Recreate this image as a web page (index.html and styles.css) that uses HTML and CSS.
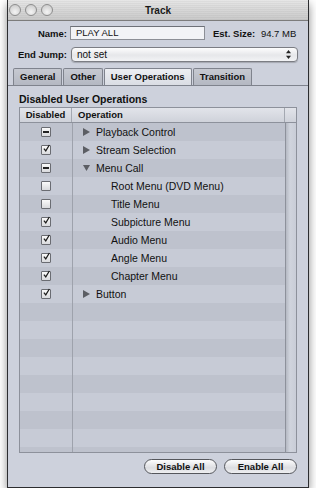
FILE: index.html
```
<!DOCTYPE html>
<html lang="en">
<head>
<meta charset="UTF-8">
<title>Track</title>
<link rel="stylesheet" href="styles.css">
</head>
<body>
<div class="window">
  <div class="titlebar">
    <div class="lights"><span></span><span></span><span></span></div>
    <div class="title">Track</div>
  </div>

  <div class="form-row name-row">
    <label class="label">Name:</label>
    <div class="field">PLAY ALL</div>
    <div class="est"><b>Est. Size:</b> 94.7 MB</div>
  </div>
  <div class="form-row jump-row">
    <label class="label">End Jump:</label>
    <div class="popup">
      <span>not set</span>
      <svg class="arrows" width="5" height="9" viewBox="0 0 5 9"><polygon points="2.5,0 5,3.3 0,3.3" fill="#222"/><polygon points="0,5.7 5,5.7 2.5,9" fill="#222"/></svg>
    </div>
  </div>

  <div class="tabs">
    <div class="tab">General</div>
    <div class="tab">Other</div>
    <div class="tab active">User Operations</div>
    <div class="tab">Transition</div>
  </div>

  <div class="panel">
    <h2 class="heading">Disabled User Operations</h2>
    <div class="table">
      <div class="thead">
        <div class="th th-dis">Disabled</div>
        <div class="th th-op">Operation</div>
        <div class="th"></div>
      </div>
      <div class="tbody">
        <div class="rows">
          <div class="row"><span class="box mixed"><i></i></span><span class="op"><svg class="tri" width="7" height="8" viewBox="0 0 7 8"><polygon points="0,0 7,4 0,8" fill="#5c5e64"/></svg>Playback Control</span></div>
          <div class="row"><span class="box"><svg width="11" height="11" viewBox="0 0 11 11"><path d="M2.3 5.6 L4.6 8.4 L9 1.2" fill="none" stroke="#1c1c1c" stroke-width="1.5"/></svg></span><span class="op"><svg class="tri" width="7" height="8" viewBox="0 0 7 8"><polygon points="0,0 7,4 0,8" fill="#5c5e64"/></svg>Stream Selection</span></div>
          <div class="row"><span class="box mixed"><i></i></span><span class="op"><svg class="tri" width="7" height="8" viewBox="0 0 8 8"><polygon points="0,0.5 8,0.5 4,7.5" fill="#5c5e64"/></svg>Menu Call</span></div>
          <div class="row"><span class="box"></span><span class="op child">Root Menu (DVD Menu)</span></div>
          <div class="row"><span class="box"></span><span class="op child">Title Menu</span></div>
          <div class="row"><span class="box"><svg width="11" height="11" viewBox="0 0 11 11"><path d="M2.3 5.6 L4.6 8.4 L9 1.2" fill="none" stroke="#1c1c1c" stroke-width="1.5"/></svg></span><span class="op child">Subpicture Menu</span></div>
          <div class="row"><span class="box"><svg width="11" height="11" viewBox="0 0 11 11"><path d="M2.3 5.6 L4.6 8.4 L9 1.2" fill="none" stroke="#1c1c1c" stroke-width="1.5"/></svg></span><span class="op child">Audio Menu</span></div>
          <div class="row"><span class="box"><svg width="11" height="11" viewBox="0 0 11 11"><path d="M2.3 5.6 L4.6 8.4 L9 1.2" fill="none" stroke="#1c1c1c" stroke-width="1.5"/></svg></span><span class="op child">Angle Menu</span></div>
          <div class="row"><span class="box"><svg width="11" height="11" viewBox="0 0 11 11"><path d="M2.3 5.6 L4.6 8.4 L9 1.2" fill="none" stroke="#1c1c1c" stroke-width="1.5"/></svg></span><span class="op child">Chapter Menu</span></div>
          <div class="row"><span class="box"><svg width="11" height="11" viewBox="0 0 11 11"><path d="M2.3 5.6 L4.6 8.4 L9 1.2" fill="none" stroke="#1c1c1c" stroke-width="1.5"/></svg></span><span class="op"><svg class="tri" width="7" height="8" viewBox="0 0 7 8"><polygon points="0,0 7,4 0,8" fill="#5c5e64"/></svg>Button</span></div>
        </div>
        <div class="strip"></div>
      </div>
    </div>
    <div class="buttons">
      <button type="button" class="button">Disable All</button>
      <button type="button" class="button">Enable All</button>
    </div>
  </div>
</div>
</body>
</html>
```

FILE: styles.css
```
body {
  margin: 0;
  background: #fff;
  font-family: "Liberation Sans", Arial, sans-serif;
  color: #111;
}

.window {
  margin-left: 7px;
  width: 300px;
  background: #cdd1dc;
  border: 1px solid #2c2d30;
  border-top: none;
  box-shadow: 0 4px 9px rgba(0, 0, 0, 0.45);
}

.titlebar {
  position: relative;
  height: 20px;
  border-bottom: 1px solid #7c7c7c;
  background:
    repeating-linear-gradient(transparent 0 1px, rgba(0, 0, 0, 0.035) 1px 2px),
    linear-gradient(#e6e6e6, #c9c9c9);
  display: flex;
  align-items: center;
  justify-content: center;
}
.lights {
  position: absolute;
  left: 1px;
  top: 4px;
  display: flex;
  gap: 4px;
}
.lights span {
  width: 10px;
  height: 10px;
  border-radius: 50%;
  border: 1px solid #8d8d8d;
  background: radial-gradient(circle at 50% 70%, #f4f4f4, #c4c4c4);
}
.title {
  font-size: 10px;
  font-weight: bold;
  color: #1a1a1a;
}

.form-row {
  display: flex;
  align-items: center;
}
.name-row {
  margin-top: 5px;
  height: 14px;
}
.jump-row {
  margin-top: 7px;
  height: 15px;
}
.label {
  width: 59px;
  text-align: right;
  font-size: 9.5px;
  font-weight: bold;
}
.field {
  margin-left: 3px;
  width: 128px;
  height: 12px;
  padding-left: 5px;
  border: 1px solid #8c8f96;
  border-top-color: #6d7077;
  background: #f2f3f6;
  font-size: 9.5px;
  line-height: 12px;
}
.est {
  margin-left: 8px;
  font-size: 9.5px;
}
.est b {
  margin-right: 3px;
}
.popup {
  margin-left: 4px;
  width: 214px;
  height: 13px;
  padding: 0 6px 0 5px;
  border: 1px solid #7b7d83;
  border-radius: 4px;
  background: linear-gradient(#fdfdfd, #e6e7ea 55%, #f2f3f5);
  box-shadow: 0 1px 1px rgba(0, 0, 0, 0.2);
  display: flex;
  align-items: center;
  justify-content: space-between;
  font-size: 10px;
}

.tabs {
  margin-top: 6px;
  padding-left: 5px;
  display: flex;
  gap: 1px;
  border-bottom: 1px solid #7f838d;
}
.tab {
  height: 16px;
  line-height: 16px;
  padding: 0 6px;
  border: 1px solid #7f838d;
  border-bottom: none;
  border-radius: 2px 2px 0 0;
  background: linear-gradient(#c6c9d1, #b4b8c2);
  font-size: 9.5px;
  font-weight: bold;
}
.tab.active {
  background: linear-gradient(#eceef2, #dadde4);
}

.panel {
  padding: 7px 11px 13px;
}
.heading {
  margin: 0 0 1px;
  font-size: 10.5px;
  line-height: 13px;
  font-weight: bold;
}

.table {
  border: 1px solid #8d919b;
}
.thead {
  display: grid;
  grid-template-columns: 52px 213px 10px;
  height: 14px;
  border-bottom: 1px solid #8d919b;
  background: linear-gradient(#e2e4ea, #cfd2da);
}
.th {
  font-size: 9.5px;
  font-weight: bold;
  line-height: 14px;
  border-right: 1px solid #a4a8b1;
}
.th:last-child {
  border-right: none;
}
.th-dis {
  text-align: center;
}
.th-op {
  padding-left: 6px;
}

.tbody {
  display: flex;
  height: 329px;
}
.rows {
  flex: 1;
  border-right: 1px solid #8d919b;
  background:
    linear-gradient(to right, transparent 52px, #9ea2ac 52px 53px, transparent 53px),
    repeating-linear-gradient(#bec2cd 0 18px, #c7cbd6 18px 36px);
}
.row {
  display: grid;
  grid-template-columns: 53px 1fr;
  height: 18px;
  align-items: center;
}
.box {
  justify-self: center;
  margin-right: 1px;
  width: 8px;
  height: 8px;
  border: 1px solid #6a6c72;
  border-radius: 1px;
  background: linear-gradient(#fafafa, #d9dadd);
  display: flex;
  align-items: center;
  justify-content: center;
}
.box svg {
  margin: -3px -1px 0 0;
}
.mixed i {
  width: 6px;
  height: 2px;
  background: #222;
}
.op {
  display: flex;
  align-items: center;
  padding-left: 10px;
  font-size: 10.5px;
}
.tri {
  margin-right: 6px;
}
.op.child {
  padding-left: 38px;
}
.strip {
  width: 10px;
  background: linear-gradient(to right, #b5b9c3, #d0d4dd 40%, #c9cdd7);
}

.buttons {
  margin-top: 6px;
  display: flex;
  justify-content: flex-end;
  gap: 7px;
}
.button {
  width: 73px;
  height: 15px;
  padding: 0;
  border: 1px solid #55575c;
  border-radius: 8px;
  background: linear-gradient(#fdfdfd, #dcdde1 60%, #eeeff1);
  font-family: "Liberation Sans", Arial, sans-serif;
  font-size: 9.5px;
  font-weight: bold;
  color: #111;
}
```
